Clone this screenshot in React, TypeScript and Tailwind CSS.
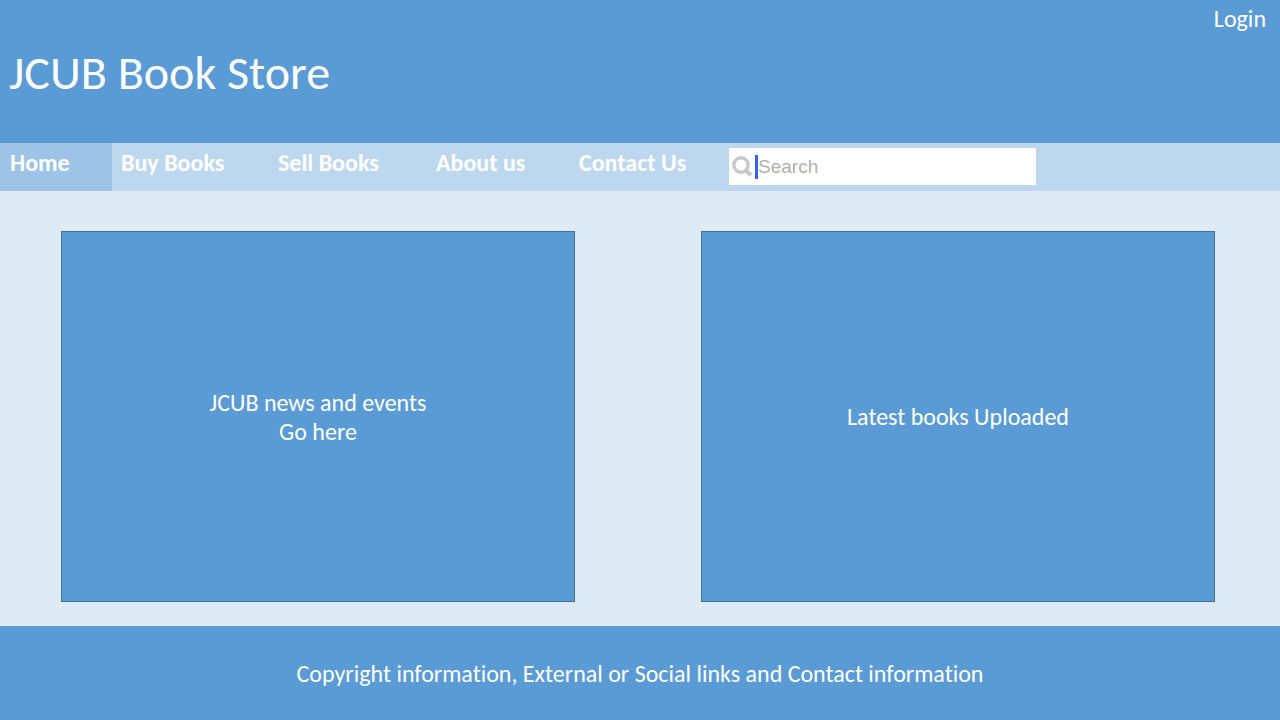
const links = [
  { label: 'Home', cell: 'w-[112px] pl-[10px] bg-[#9dc3e6]' },
  { label: 'Buy Books', cell: 'w-[156px] pl-[9px]' },
  { label: 'Sell Books', cell: 'w-[158px] pl-[10px]' },
  { label: 'About us', cell: 'w-[144px] pl-[10px]' },
  { label: 'Contact Us', cell: 'w-[159px] pl-[9px]' },
];

function SearchBox() {
  return (
    <label className="my-[5px] flex h-[37px] w-[307px] items-center bg-white pl-[2px]">
      <svg className="h-6 w-6 shrink-0" viewBox="0 0 24 24" fill="none" stroke="#c8c8c8" aria-hidden="true">
        <circle cx="10" cy="10" r="7.2" strokeWidth="3.4" />
        <path d="M14.8 15.2 20 20.2" strokeWidth="4" />
      </svg>
      <span className="h-6 w-[3px] shrink-0 bg-[#3560f0]" />
      <input
        type="search"
        aria-label="Search"
        placeholder="Search"
        className="w-full min-w-0 bg-transparent font-['Liberation_Sans',sans-serif] text-[19px] font-normal text-gray-700 outline-none placeholder:text-[#b0b0b0]"
      />
    </label>
  );
}

export default function App() {
  return (
    <div className="flex min-h-screen flex-col bg-[#deeaf6] font-[Carlito,Calibri,Lato,sans-serif] text-[24px] leading-[29px] text-white [font-variant-ligatures:none]">
      <header className="flex h-[143px] items-start justify-between bg-[#5b9bd5] pr-[14px] pl-[9px]">
        <h1 className="pt-[44px] text-[48px] leading-[58px]">JCUB Book Store</h1>
        <a href="#login" className="pt-[4px]">Login</a>
      </header>
      <nav className="flex h-[48px] bg-[#bdd7ee] font-bold">
        {links.map((link) => (
          <a key={link.label} href="#" className={`shrink-0 pt-[5px] whitespace-nowrap ${link.cell}`}>
            {link.label}
          </a>
        ))}
        <SearchBox />
      </nav>
      <main className="grid grow grid-cols-2 gap-[126px] pt-[40px] pr-[65px] pb-[24px] pl-[61px] text-center">
        <section className="flex items-center justify-center border border-[#41719c] bg-[#5b9bd5]">
          <p>JCUB news and events<br />Go here</p>
        </section>
        <section className="flex items-center justify-center border border-[#41719c] bg-[#5b9bd5]">
          <p>Latest books Uploaded</p>
        </section>
      </main>
      <footer className="flex h-[94px] items-center justify-center bg-[#5b9bd5]">
        <p>Copyright information, External or Social links and Contact information</p>
      </footer>
    </div>
  );
}
